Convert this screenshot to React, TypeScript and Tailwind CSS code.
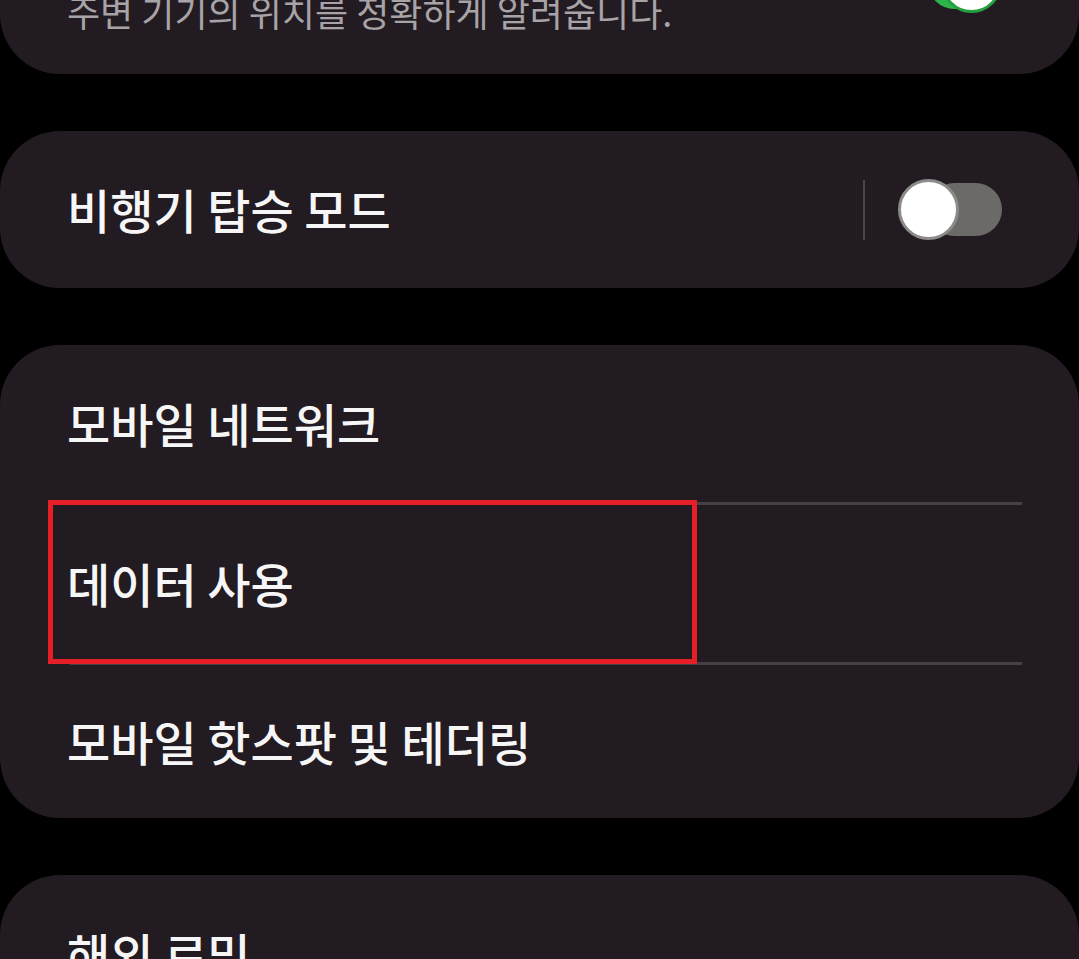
import React, { useState } from "react"

const font = { fontFamily: '"Noto Sans CJK KR", "Noto Sans", sans-serif' }

function Toggle({ on, onChange }: { on: boolean; onChange: () => void }) {
  return (
    <button
      onClick={onChange}
      className={`relative flex h-[61px] w-[104px] shrink-0 items-center`}
    >
      <span
        className={`absolute left-[30px] right-0 top-[4px] h-[53px] rounded-full ${
          on ? "bg-[#2db44a]" : "bg-[#6b6a66]"
        }`}
      />
      <span
        className={`absolute top-0 h-[61px] w-[61px] rounded-full border-[3px] bg-white ${
          on ? "left-[43px] border-[#25a03f]" : "left-0 border-[#8c8b89]"
        }`}
      />
    </button>
  )
}

function Row({
  label,
  last,
  highlight,
  short,
}: {
  label: string
  last?: boolean
  highlight?: boolean
  short?: boolean
}) {
  return (
    <div className="relative">
      <div
        className={`flex items-center pl-[67px] text-[47px] font-medium text-[#f7f6f7] ${
          short ? "h-[153px]" : "h-[157px]"
        }`}
      >
        {label}
      </div>
      {highlight && (
        <div className="pointer-events-none absolute left-[48px] top-[-5px] h-[164px] w-[649px] border-[5px] border-[#e61e28]" />
      )}
      {!last && <div className="ml-[70px] mr-[57px] h-[3px] bg-[#454046]" />}
    </div>
  )
}

export default function App() {
  const [uwb, setUwb] = useState(true)
  const [airplane, setAirplane] = useState(false)

  return (
    <div className="h-[959px] w-full overflow-hidden bg-black" style={font}>
      <div className="flex flex-col gap-[57px]">
        {/* UWB */}
        <div className="-mt-[83px] flex h-[157px] items-center rounded-[60px] bg-[#221b21] pl-[67px] pr-[77px]">
          <div className="flex-1 pt-[30px]">
            <p className="text-[36px] leading-[44px] text-[#a7a3a7]">주변 기기의 위치를 정확하게 알려줍니다.</p>
          </div>
          <div className="-mt-[27px]">
            <Toggle on={uwb} onChange={() => setUwb(!uwb)} />
          </div>
        </div>

        {/* Airplane mode */}
        <div className="flex h-[157px] items-center rounded-[60px] bg-[#221b21] pl-[67px] pr-[77px]">
          <span className="flex-1 text-[47px] font-medium text-[#f7f6f7]">비행기 탑승 모드</span>
          <div className="mr-[33px] h-[60px] w-[2px] bg-[#4a454b]" />
          <Toggle on={airplane} onChange={() => setAirplane(!airplane)} />
        </div>

        {/* Mobile network */}
        <div className="rounded-[60px] bg-[#221b21]">
          <Row label="모바일 네트워크" />
          <Row label="데이터 사용" highlight />
          <Row label="모바일 핫스팟 및 테더링" last short />
        </div>

        {/* Roaming */}
        <div className="rounded-[60px] bg-[#221b21]">
          <Row label="해외 로밍" last />
        </div>
      </div>
    </div>
  )
}
